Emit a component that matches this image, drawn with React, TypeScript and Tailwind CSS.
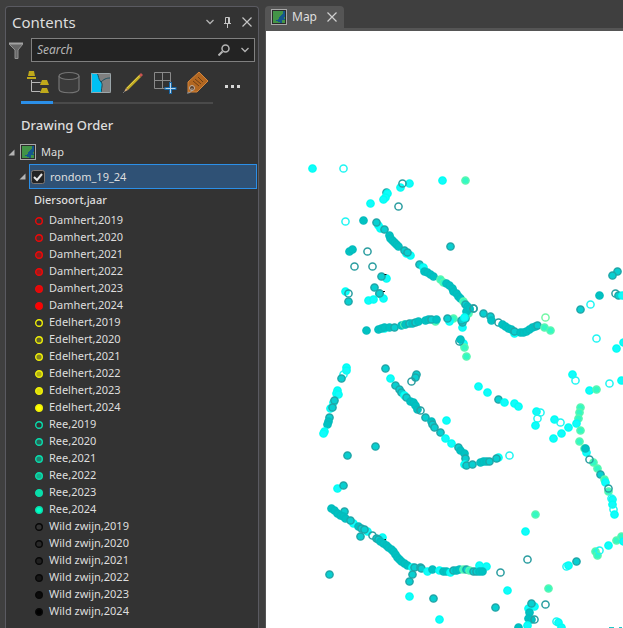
import { useState } from 'react';
import type { ReactNode } from 'react';

type Kind = 'c' | 't' | 'd' | 'g' | 'o' | 'O' | 'G';

const MARKERS: Record<Kind, { fill: string; stroke: string }> = {
  c: { fill: '#12fbfb', stroke: '#00fff4' },
  t: { fill: '#08cfd0', stroke: '#1fa6a8' },
  d: { fill: '#00c2c2', stroke: '#04bcbd' },
  g: { fill: '#33f9c4', stroke: '#58f7b0' },
  o: { fill: 'none', stroke: '#2a9da0' },
  O: { fill: 'none', stroke: '#1ff5f2' },
  G: { fill: 'none', stroke: '#73f7a5' },
};

// kind x y, relative to the top left corner of the map view
const POINTS = `
c 47 137,O 78 137,c 135 156,c 144 152,o 137 152,c 177 149,g 200 149,t 121 161,c 122 162,c 120 166,c 118 168,c 105 172,o 133 175,
O 80 190,d 98 189,c 113 194,c 115 197,t 111 191,t 119 198,d 124 204,d 125 207,d 127 209,d 129 211,d 131 213,d 133 215,c 141 222,c 145 224,t 139 219,t 142 221,
t 154 233,c 158 236,d 159 240,d 162 241,d 165 243,d 168 245,g 175 248,g 178 251,d 181 252,d 184 254,d 187 257,d 188 260,d 191 262,d 193 265,d 195 267,g 198 270,t 200 273,d 202 275,d 204 278,o 208 277,g 203 282,
t 185 215,d 84 220,d 87 218,o 102 220,o 89 235,o 107 235,c 121 247,t 116 245,t 109 256,t 114 262,c 118 267,t 114 262,c 103 269,c 108 268,c 80 260,o 83 262,t 83 270,
d 101 299,c 119 297,d 113 298,d 116 297,d 119 296,d 124 296,t 129 296,d 136 294,g 139 293,d 140 293,t 144 292,d 147 292,t 150 291,d 153 290,g 170 290,d 160 289,d 163 288,t 166 288,d 171 288,
g 188 287,c 184 290,t 182 287,t 200 287,c 197 296,t 197 291,t 196 289,d 201 280,d 204 277,o 208 277,c 199 286,c 198 312,g 199 316,o 194 310,d 195 308,g 201 325,
c 81 336,c 81 339,O 78 343,t 76 347,c 72 359,c 71 362,c 73 363,c 68 371,t 69 369,c 65 377,t 67 376,t 64 386,d 63 390,d 62 393,c 59 400,c 58 402,
t 120 337,c 125 347,t 130 354,t 134 358,t 136 361,c 139 364,t 141 366,d 145 370,d 148 371,d 150 374,d 152 378,o 155 379,t 160 386,d 166 390,t 167 393,t 169 396,t 175 401,c 180 407,c 186 412,t 193 416,d 195 419,d 199 422,t 200 427,c 199 433,t 201 434,t 207 433,
c 181 389,t 151 343,t 150 346,o 146 350,t 110 415,t 82 424,
t 218 282,t 225 285,d 226 289,o 233 291,c 249 302,d 237 293,d 240 295,d 243 297,d 246 298,t 249 300,d 255 301,d 258 301,d 261 300,d 264 298,d 267 296,d 270 295,t 272 294,G 280 286,g 279 296,g 285 299,
c 213 355,c 222 361,t 233 368,c 239 371,c 249 372,c 253 375,c 271 380,O 275 381,O 272 387,c 270 394,c 289 388,O 295 391,c 296 402,c 288 407,
t 352 240,t 347 244,d 334 264,t 315 278,O 325 273,o 350 262,t 353 264,c 357 264,O 331 307,c 351 317,c 358 311,c 307 343,O 310 349,c 324 359,g 331 358,O 344 352,c 356 349,
g 315 376,g 314 381,g 313 387,c 311 392,c 303 396,g 315 399,g 314 410,g 319 417,c 321 421,d 320 417,g 328 431,o 324 428,g 332 437,t 335 443,g 339 448,c 340 451,g 343 460,o 343 457,c 347 468,O 346 467,c 347 473,O 348 478,c 349 483,
d 215 431,d 218 430,d 221 430,t 224 430,c 233 426,t 231 427,O 244 424,g 270 483,c 260 500,o 262 528,c 221 535,o 235 541,c 242 559,t 230 576,g 283 557,o 280 573,
c 269 575,c 263 577,t 266 572,d 264 581,d 263 587,d 266 588,o 269 588,c 262 594,d 253 596,O 291 590,c 293 591,c 296 596,O 301 535,c 303 534,t 311 530,g 330 520,g 332 524,O 334 519,c 343 514,g 351 509,g 356 505,c 358 510,
c 72 457,t 78 454,t 79 480,d 66 477,d 69 479,d 72 482,d 75 484,d 78 485,d 80 487,c 88 492,t 85 489,d 93 495,t 96 497,c 102 500,t 99 498,t 95 505,o 107 504,c 117 506,t 111 507,t 113 508,
d 115 510,d 118 512,d 121 514,d 123 516,d 126 518,d 128 520,d 130 523,d 132 526,d 134 528,d 136 530,d 139 532,d 142 534,c 147 536,t 149 536,t 147 543,t 144 550,c 144 565,t 168 567,c 174 588,t 64 543,
t 155 536,t 156 537,c 162 540,d 167 538,c 174 539,d 178 540,d 181 540,c 185 541,t 188 539,d 191 539,d 194 538,g 198 538,t 201 538,g 204 539,t 208 540,t 211 540,c 214 534,d 214 540,d 217 540
`
  .trim()
  .split(',')
  .map((entry) => {
    const [kind, x, y] = entry.trim().split(' ');
    return { kind: kind as Kind, x: Number(x), y: Number(y) };
  });

const SPECIES = [
  { name: 'Damhert', stroke: '#f00808', fills: ['#333333', '#582929', '#862020', '#a01a1a', '#dd0b0b', '#ff0000'] },
  { name: 'Edelhert', stroke: '#f0f008', fills: ['#333333', '#666629', '#86861f', '#b0b015', '#dddd0b', '#ffff00'] },
  { name: 'Ree', stroke: '#08dfae', fills: ['#333333', '#29665a', '#208672', '#15b08c', '#0bdda8', '#00ffc5'] },
  { name: 'Wild zwijn', stroke: '#080808', fills: ['#333333', '#292929', '#202020', '#161616', '#0b0b0b', '#000000'] },
];

function MapIcon() {
  return (
    <svg width="16" height="16" viewBox="0 0 16 16" className="shrink-0" shapeRendering="crispEdges">
      <rect x="0.5" y="0.5" width="15" height="15" fill="#2b2b2b" stroke="#a9a9a9" />
      <rect x="2" y="2" width="12" height="12" fill="#439447" />
      <path d="M12 2h2v3h-2zM10 6h1V5h3v3h-1v2h1v1h-3v3H9v-1H7v-1H5v-1h2v-1h1V8h1V7h1z" fill="#15578c" />
    </svg>
  );
}

function Cross({ color }: { color: string }) {
  return (
    <svg width="10" height="10" viewBox="0 0 10 10" fill="none" stroke={color} strokeWidth="1.2">
      <path d="M0.5 0.5l9 9M9.5 0.5l-9 9" />
    </svg>
  );
}

function Chevron() {
  return (
    <svg width="8" height="6" viewBox="0 0 8 6" fill="none" stroke="#b4b4b4" strokeWidth="1.3">
      <path d="M0.5 1l3.5 3.5L7.5 1" />
    </svg>
  );
}

function Expander() {
  return (
    <svg width="7" height="7" viewBox="0 0 7 7" className="shrink-0">
      <path d="M6.5 0.5v6h-6z" fill="#b4b4b4" />
    </svg>
  );
}

const VIEWS: { label: string; icon: ReactNode }[] = [
  {
    label: 'List by drawing order',
    icon: (
      <>
        <path d="M6.500 9v11.500h9M6.500 11.500h9" stroke="#b8b8b8" fill="none" />
        <path d="M4 0h5l1 5H3zM2 6h9v2H2zM17 9h5l2 5h-9zM17 17h5l2 5h-9z" fill="#bfa91b" />
      </>
    ),
  },
  {
    label: 'List by data source',
    icon: (
      <g fill="#3b3b3b" stroke="#757575" strokeWidth="1.2">
        <path d="M2 5v13c0 5 20 5 20 0V5" />
        <ellipse cx="12" cy="5" rx="10" ry="3.5" fill="#333" />
      </g>
    ),
  },
  {
    label: 'List by selection',
    icon: (
      <>
        <rect x="2" y="2" width="20" height="20" rx="1" fill="#7f7f7f" />
        <path d="M2 2h6c2 3 1 6 4 9 2 3-1 7 1 11H2z" fill="#00c0f3" />
        <path d="M8 2c2 3 1 6 4 9s-1 7 1 11M12 11c4-4 7-4 10-4" fill="none" stroke="#174f60" />
        <rect x="2.5" y="2.5" width="19" height="19" rx="1" fill="none" stroke="#9ba6aa" />
      </>
    ),
  },
  {
    label: 'List by editing',
    icon: (
      <>
        <path d="M5 17L18 4l2 2L7 19z" fill="#c3ad23" />
        <path d="M6 17L19 4" stroke="#e0cb4a" />
        <path d="M18 4l2-2 2 2-2 2z" fill="#c95450" />
        <path d="M5 17l2 2-4 2z" fill="#d9ad75" />
        <path d="M4 20l-2 2" stroke="#777" />
      </>
    ),
  },
  {
    label: 'List by snapping',
    icon: (
      <>
        <path d="M12 17.500H1.500V1.500h16V11M9.500 1.500v16M1.500 9.500h16" fill="none" stroke="#8a8a8a" />
        <path d="M17.500 11v12M11.500 17.500h12" stroke="#1766a5" strokeWidth="3" />
        <path d="M17.500 12v10M12.500 17.500h10" stroke="#b9d7ec" />
      </>
    ),
  },
  {
    label: 'List by labeling',
    icon: (
      <>
        <path d="M14 1l9 9L12 21H3V11z" fill="#b26721" stroke="#d3853c" />
        <path d="M8 10l6 5M10 8l6 5M13 6l5 5" stroke="#6c3e15" />
        <circle cx="7" cy="17" r="2.500" fill="#5d422d" stroke="#c3b3a5" />
        <path d="M7 17c0 4-2 5-5 5" fill="none" stroke="#a6a6a6" />
      </>
    ),
  },
];

function Contents() {
  const [visible, setVisible] = useState(true);
  return (
    <aside className="mt-1.5 ml-[5px] w-[254px] shrink-0 rounded-t border border-b-0 border-[#5a5a61] bg-[#333333]">
      <header className="flex h-[30px] items-center px-1.5">
        <h1 className="flex-1 text-[15px]">Contents</h1>
        <button type="button" aria-label="Options" className="mr-2.5">
          <Chevron />
        </button>
        <button type="button" aria-label="Pin" className="mr-[11px]">
          <svg width="7" height="11" viewBox="0 0 7 11" fill="none" stroke="#c4c4c4">
            <path d="M1.500 7V0.500h4V7M0 6.500h7M3.500 7v4M4.500 1v6" />
          </svg>
        </button>
        <button type="button" aria-label="Close">
          <Cross color="#c4c4c4" />
        </button>
      </header>

      <div className="mt-px flex items-center pr-[3px]">
        <button type="button" aria-label="Filter" className="w-[25px] pl-[3px]">
          <svg width="14" height="17" viewBox="0 0 14 17">
            <path d="M0.500 1.500h13v1L9 8v8.500H6V8L0.500 2.500z" fill="#686868" stroke="#929292" />
            <path d="M0 1.500h14" stroke="#a3a3a3" strokeWidth="2" />
          </svg>
        </button>
        <div className="flex h-6 min-w-0 flex-1 items-center border border-[#808080] bg-[#232323] pr-[5px]">
          <input
            type="text"
            aria-label="Search"
            placeholder="Search"
            className="min-w-0 flex-1 bg-transparent pl-[5px] text-[12px] italic outline-none placeholder:text-[#b4b4b4]"
          />
          <button type="button" aria-label="Run search" className="mr-[11px]">
            <svg width="12" height="12" viewBox="0 0 12 12" fill="none" stroke="#b4b4b4">
              <circle cx="7.500" cy="4.500" r="3.500" strokeWidth="1.500" />
              <path d="M4.500 7.500L0.500 11.500" strokeWidth="2" />
            </svg>
          </button>
          <button type="button" aria-label="Search options">
            <Chevron />
          </button>
        </div>
      </div>

      <nav className="mt-[9px] flex pl-[15px]">
        <div className="flex border-b-2 border-[#4a4a4a]">
          {VIEWS.map((view, i) => (
            <button
              key={view.label}
              type="button"
              aria-label={view.label}
              className={`-mb-0.5 flex h-[33px] w-8 justify-center ${i === 0 ? 'border-b-3 border-[#2b8fe8]' : ''}`}
            >
              <svg width="24" height="24" viewBox="0 0 24 24">
                {view.icon}
              </svg>
            </button>
          ))}
        </div>
        <button type="button" aria-label="More" className="mt-3.5 ml-3 flex h-3 gap-[3px]">
          <span className="size-[3px] bg-[#d8d8d8]" />
          <span className="size-[3px] bg-[#d8d8d8]" />
          <span className="size-[3px] bg-[#d8d8d8]" />
        </button>
      </nav>

      <h2 className="mt-[11px] pl-[15px] text-[13px] leading-5 font-medium">Drawing Order</h2>

      <div className="mt-[7px] flex h-5 items-center pl-0.5">
        <Expander />
        <span className="ml-[5px] flex items-center gap-[5px]">
          <MapIcon />
          Map
        </span>
      </div>

      <div className="mt-0.5 flex items-center pr-px pl-[13px]">
        <Expander />
        <label className="ml-[3px] flex h-[25px] flex-1 items-center gap-[5px] border border-[#2b8fe8] bg-[#2f5175] pl-px">
          <input type="checkbox" checked={visible} onChange={() => setVisible(!visible)} className="peer sr-only" />
          <svg
            width="14"
            height="14"
            viewBox="0 0 14 14"
            className="[&>path]:opacity-0 peer-checked:[&>path]:opacity-100"
          >
            <rect x="0.500" y="0.500" width="13" height="13" rx="2" fill="#232323" stroke="#7d7774" />
            <path d="M3 7l3 3 5-6" fill="none" stroke="#e6e6e6" strokeWidth="2" />
          </svg>
          rondom_19_24
        </label>
      </div>

      <h3 className="mt-0.5 pl-7 leading-[18px] font-medium">Diersoort,jaar</h3>
      <ul className="mt-0.5">
        {SPECIES.map((species) =>
          species.fills.map((fill, i) => (
            <li key={`${species.name}${i}`} className="flex h-[17px] items-center gap-1.5 pl-[29px] leading-[17px]">
              <svg width="8" height="8" viewBox="0 0 8 8" className="mt-0.5 shrink-0">
                <circle cx="4" cy="4" r="3.3" fill={fill} stroke={species.stroke} strokeWidth="1.4" />
              </svg>
              {species.name},{2019 + i}
            </li>
          )),
        )}
      </ul>
    </aside>
  );
}

function MapView() {
  return (
    <main className="mt-1.5 ml-1.5 flex min-w-0 flex-1 flex-col">
      <div className="flex">
        <div className="flex h-[22px] items-center rounded-t bg-[#555555] pr-[7px] pl-1.5">
          <MapIcon />
          <span className="mr-2.5 ml-[5px] text-[12px]">Map</span>
          <button type="button" aria-label="Close map">
            <Cross color="#d0d0d0" />
          </button>
        </div>
      </div>
      <div className="flex-1 border-t-3 border-l border-[#555555] bg-white">
        <svg width="100%" height="597" role="img" aria-label="Observations">
          <g transform="translate(-0.5 0.5)" strokeWidth="1.5">
            {POINTS.map(({ kind, x, y }, i) => (
              <circle key={i} cx={x} cy={y} r="3.600" fill={MARKERS[kind].fill} stroke={MARKERS[kind].stroke} />
            ))}
          </g>
          <path d="M118.500 243.500h2M117 260.500h2M118.500 508.500h1.500" stroke="#111" />
          <path d="M343 596.500h5M353 596.500h3" stroke="#1fc9c9" />
        </svg>
      </div>
    </main>
  );
}

export default function App() {
  return (
    <div className="flex min-h-screen overflow-hidden bg-[#3f3f3f] font-['Noto_Sans','Segoe_UI',sans-serif] text-[11px] leading-4 text-[#dedede]">
      <Contents />
      <MapView />
    </div>
  );
}
